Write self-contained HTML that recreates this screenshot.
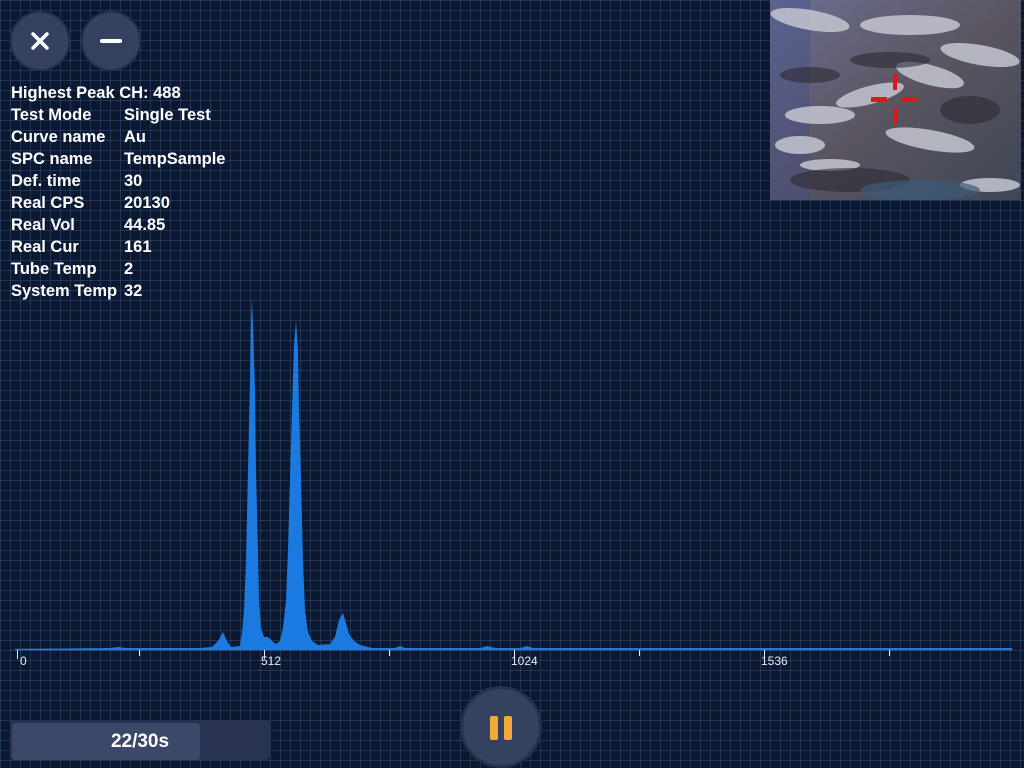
<!DOCTYPE html>
<html><head><meta charset="utf-8"><style>
html,body{margin:0;padding:0}
body{width:1024px;height:768px;overflow:hidden;position:relative;background-color:#0b1830;
background-image:linear-gradient(to right,rgba(60,88,130,.45) 1px,transparent 1px),linear-gradient(to bottom,rgba(60,88,130,.45) 1px,transparent 1px);
background-size:10px 10px;font-family:"Liberation Sans",sans-serif;color:#fff}
.btn{position:absolute;width:56px;height:56px;border-radius:50%;background:#344260;border:2px solid #26324c}
.info{position:absolute;left:11px;top:82px;font-size:16.5px;font-weight:bold;line-height:22px}
.info div{white-space:nowrap}
.info span{display:inline-block;width:113px}
.ax{position:absolute;font-size:12px;top:654px;color:#e8ecf4}
</style></head><body>
<div class="btn" style="left:10px;top:11px"><svg width="56" height="56"><path d="M21 21L35 35M35 21L21 35" stroke="#fff" stroke-width="3.5" stroke-linecap="round"/></svg></div>
<div class="btn" style="left:81px;top:11px"><svg width="56" height="56"><path d="M19 28H37" stroke="#fff" stroke-width="4" stroke-linecap="round"/></svg></div>
<div class="info">
<div>Highest Peak CH: 488</div>
<div><span>Test Mode</span>Single Test</div>
<div><span>Curve name</span>Au</div>
<div><span>SPC name</span>TempSample</div>
<div><span>Def. time</span>30</div>
<div><span>Real CPS</span>20130</div>
<div><span>Real Vol</span>44.85</div>
<div><span>Real Cur</span>161</div>
<div><span>Tube Temp</span>2</div>
<div><span>System Temp</span>32</div>
</div>
<svg style="position:absolute;left:770px;top:0" width="251" height="200">
<defs><linearGradient id="g" x1="0" y1="0" x2="1" y2="1"><stop offset="0" stop-color="#6c6f92"/><stop offset=".5" stop-color="#5a5560"/><stop offset="1" stop-color="#3e4656"/></linearGradient></defs>
<rect width="251" height="200" fill="url(#g)"/>
<rect width="40" height="200" fill="#3d4a90" opacity=".35"/>
<g fill="#c4c6d0" opacity=".85">
<ellipse cx="40" cy="20" rx="40" ry="10" transform="rotate(10 40 20)"/>
<ellipse cx="140" cy="25" rx="50" ry="10"/>
<ellipse cx="50" cy="115" rx="35" ry="9"/>
<ellipse cx="160" cy="75" rx="35" ry="10" transform="rotate(15 160 75)"/>
<ellipse cx="210" cy="55" rx="40" ry="10" transform="rotate(10 210 55)"/>
<ellipse cx="100" cy="95" rx="35" ry="9" transform="rotate(-15 100 95)"/>
<ellipse cx="30" cy="145" rx="25" ry="9"/>
<ellipse cx="160" cy="140" rx="45" ry="10" transform="rotate(10 160 140)"/>
<ellipse cx="220" cy="185" rx="30" ry="7"/>
<ellipse cx="60" cy="165" rx="30" ry="6"/>
</g>
<g fill="#2e2a34" opacity=".6">
<ellipse cx="120" cy="60" rx="40" ry="8"/>
<ellipse cx="80" cy="180" rx="60" ry="12"/>
<ellipse cx="200" cy="110" rx="30" ry="14"/>
<ellipse cx="40" cy="75" rx="30" ry="8"/>
</g>
<ellipse cx="150" cy="190" rx="60" ry="10" fill="#3c5a78" opacity=".7"/>
<g fill="#e0161c"><rect x="123" y="74" width="4" height="16"/><rect x="123" y="108" width="4" height="16"/><rect x="101" y="97" width="16" height="5"/><rect x="132" y="97" width="16" height="5"/></g>
</svg>
<svg style="position:absolute;left:0;top:0" width="1024" height="700">
<path d="M15,649 L110,648 L118,647 L125,648 L200,648 L212,647 L218,641 L223,632 L227,641 L231,647 L240,646 L242,633 L244,610 L246,560 L248,470 L250,380 L251,320 L252,300 L253,325 L255,390 L256,470 L258,550 L259,600 L261,628 L264,637 L268,637 L272,641 L276,644 L280,641 L283,628 L286,600 L288,550 L290,480 L292,410 L294,345 L296,321 L298,350 L299,410 L301,480 L303,560 L305,610 L308,632 L312,641 L318,645 L330,644 L335,637 L339,620 L343,613 L346,623 L349,634 L354,641 L360,645 L372,648 L395,648 L400,646 L405,648 L480,648 L487,646 L495,648 L520,648 L527,646 L533,648 L1012,648 L1012,650 L15,650 Z" fill="#1a7ae0"/>
<path d="M15,649.5H1012" stroke="#2a78d8" stroke-width="1.5"/>
<g stroke="#e8ecf4" stroke-width="1"><path d="M17.5,650v9M139.5,650v6M264.5,650v9M389.5,650v6M514.5,650v9M639.5,650v6M764.5,650v9M889.5,650v6"/></g>
</svg>
<div class="ax" style="left:20px">0</div>
<div class="ax" style="left:261px">512</div>
<div class="ax" style="left:511px">1024</div>
<div class="ax" style="left:761px">1536</div>
<div style="position:absolute;left:10px;top:720px;width:260px;height:40px;background:#273350;border-radius:4px"></div>
<div style="position:absolute;left:12px;top:723px;width:188px;height:37px;background:#3b4868;border-radius:4px"></div>
<div style="position:absolute;left:10px;top:720px;width:260px;height:43px;line-height:43px;text-align:center;font-weight:bold;font-size:19px">22/30s</div>
<div style="position:absolute;left:460px;top:686px;width:76px;height:76px;border-radius:50%;background:#344260;border:3px solid #26324c">
<div style="position:absolute;left:27px;top:27px;width:8px;height:24px;background:#f3a93a;border-radius:2px"></div>
<div style="position:absolute;left:41px;top:27px;width:8px;height:24px;background:#f3a93a;border-radius:2px"></div>
</div>
</body></html>
